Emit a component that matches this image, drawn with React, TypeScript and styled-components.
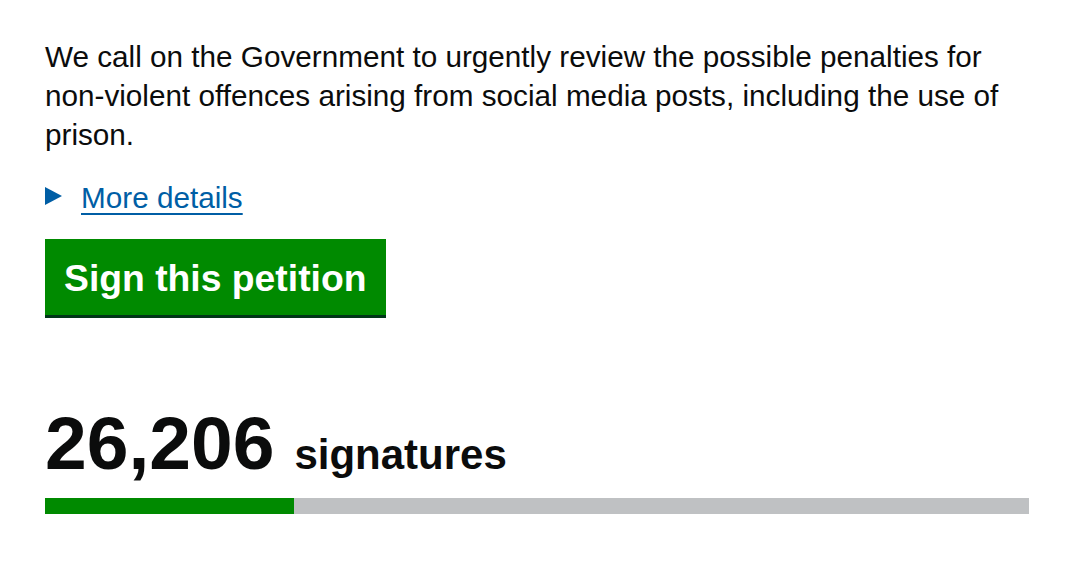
import React from "react";
import styled, { createGlobalStyle } from "styled-components";

const GlobalStyle = createGlobalStyle`
  html, body {
    margin: 0;
    padding: 0;
    background: #fff;
  }
  body {
    font-family: "Liberation Sans", Arial, sans-serif;
    color: #0b0c0c;
  }
`;

const Page = styled.main`
  padding: 37px 36px 0 45px;
  width: 984px;
`;

const Action = styled.p`
  margin: 0;
  font-size: 29.7px;
  line-height: 39px;
`;

const Details = styled.div`
  display: flex;
  align-items: center;
  margin-top: 24px;
  height: 39px;
`;

const Arrow = styled.span`
  width: 0;
  height: 0;
  border-top: 9px solid transparent;
  border-bottom: 9px solid transparent;
  border-left: 17px solid #005ea5;
  margin: 0 19px 3px 0;
`;

const DetailsLink = styled.a`
  font-size: 29.7px;
  color: #005ea5;
  text-decoration: underline;
  text-underline-offset: 5px;
  text-decoration-thickness: 2px;
`;

const SignButton = styled.button`
  display: inline-block;
  margin-top: 22px;
  padding: 16px 19px 14px;
  border: 0;
  border-radius: 0;
  background: #008a00;
  box-shadow: 0 3px 0 #003618;
  color: #fff;
  font-family: "Liberation Sans", Arial, sans-serif;
  font-weight: 700;
  font-size: 37.3px;
  line-height: 46px;
  cursor: pointer;
`;

const Count = styled.div`
  display: flex;
  align-items: baseline;
  margin-top: 88px;
  font-weight: 700;
`;

const Number = styled.span`
  font-size: 75px;
  line-height: 80px;
  margin-right: 20px;
`;

const Label = styled.span`
  font-size: 42px;
`;

const Track = styled.div`
  margin-top: 15px;
  height: 16px;
  background: #bfc1c3;
`;

const Fill = styled.div`
  height: 100%;
  background: #008a00;
`;

export default function App() {
  const progress = 249 / 984;
  return (
    <>
      <GlobalStyle />
      <Page>
        <Action>
          We call on the Government to urgently review the possible penalties
          for non-violent offences arising from social media posts, including
          the use of prison.
        </Action>
        <Details>
          <Arrow />
          <DetailsLink href="#">More details</DetailsLink>
        </Details>
        <SignButton>Sign this petition</SignButton>
        <Count>
          <Number>26,206</Number>
          <Label>signatures</Label>
        </Count>
        <Track>
          <Fill style={{ width: `${progress * 100}%` }} />
        </Track>
      </Page>
    </>
  );
}
